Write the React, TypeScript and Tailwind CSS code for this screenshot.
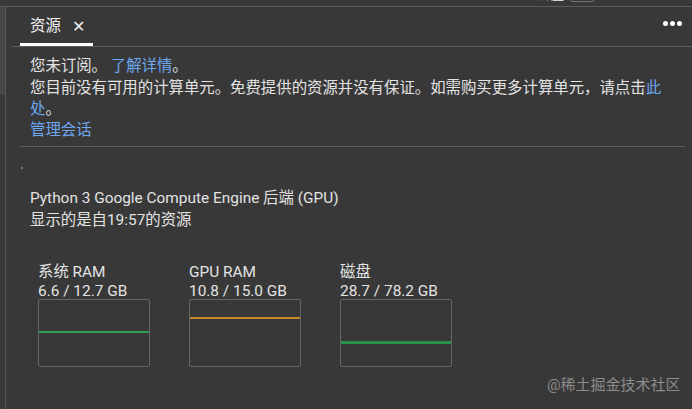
import * as React from "react";

// Colab-style "资源" side panel, dark theme.

const FONT = "font-['Roboto','Noto_Sans_CJK_SC',sans-serif]";

interface Meter {
  label: string;
  value: string;
  lineTop: number; // px from top of the chart box
  color: string;
  thick: string;
}

const METERS: Meter[] = [
  { label: "系统 RAM", value: "6.6 / 12.7 GB", lineTop: 31, color: "bg-[#2f9e55]", thick: "h-[2px]" },
  { label: "GPU RAM", value: "10.8 / 15.0 GB", lineTop: 17, color: "bg-[#c48a2c]", thick: "h-[2px]" },
  { label: "磁盘", value: "28.7 / 78.2 GB", lineTop: 41, color: "bg-[#2b8f4c]", thick: "h-[3px]" },
];

function MeterCard({ m }: { m: Meter }) {
  return (
    <div className="w-[112px]">
      <div className="text-[15.4px] leading-[19px] text-[#e3e3e3]">{m.label}</div>
      <div className="text-[15.4px] leading-[19px] text-[#e3e3e3]">{m.value}</div>
      <div className="relative mt-[-2px] h-[68px] w-[112px] rounded-[2px] border border-[#666]">
        <div
          className={`absolute left-0 right-0 ${m.color} ${m.thick}`}
          style={{ top: m.lineTop }}
        />
      </div>
    </div>
  );
}

export default function App() {
  return (
    <div className={`relative h-[409px] w-[692px] overflow-hidden bg-[#383838] ${FONT}`}>
      {/* sliver of the panel above */}
      <div className="relative h-[7px] border-b border-[#5a5a5a]">
        <span className="absolute left-[540px] top-[-13px] text-[12px] text-[#eee]">磁盘</span>
        <span className="absolute left-[570px] top-[-2px] h-[4px] w-[24px] rounded-[2px] border border-[#777]" />
      </div>

      <div className="flex h-[402px]">
        {/* left gutter / scrollbar */}
        <div className="w-[6px] border-r border-[#555]">
          <div className="h-[88px] w-[5px] bg-[#474747]" />
        </div>

        <div className="flex-1">
          {/* tab header */}
          <div className="ml-[6px] flex h-[40px] items-end justify-between border-b border-[#5c5c5c]">
            <div className="ml-[8px] flex h-[39px] w-[73px] items-center gap-[11px] border-b-[3px] border-white pl-[10px] pt-[3px] text-[15.4px] text-[#f0f0f0]">
              <span>资源</span>
              <span className="text-[16px] font-light leading-none">✕</span>
            </div>
            <div className="mb-[20px] mr-[10px] flex gap-[2px]">
              <span className="h-[5px] w-[5px] rounded-full bg-white" />
              <span className="h-[5px] w-[5px] rounded-full bg-white" />
              <span className="h-[5px] w-[5px] rounded-full bg-white" />
            </div>
          </div>

          {/* subscription notice */}
          <div className="ml-[14px] mr-[7px] border-b border-[#5c5c5c] px-[10px] pb-[5px] pt-[9px] text-[15.4px] leading-[21px] text-[#e3e3e3]">
            <div className="mb-[1px]">
              您未订阅。 <span className="text-[#6ea6ef]">了解详情</span>。
            </div>
            <div>
              您目前没有可用的计算单元。免费提供的资源并没有保证。如需购买更多计算单元，请点击
              <span className="text-[#6ea6ef]">此</span>
            </div>
            <div>
              <span className="text-[#6ea6ef]">处</span>。
            </div>
            <div className="text-[#6ea6ef]">管理会话</div>
          </div>

          {/* runtime info */}
          <div className="ml-[14px] pt-[20px]">
            <div className="ml-[1px] h-[2px] w-[2px] bg-[#777]" />
            <div className="mt-[18px] px-[10px] text-[15.4px] leading-[22px] text-[#e3e3e3]">
              <div>Python 3 Google Compute Engine 后端 (GPU)</div>
              <div>显示的是自19:57的资源</div>
            </div>

            <div className="ml-[18px] mt-[32px] flex gap-[39px]">
              {METERS.map((m) => (
                <MeterCard key={m.label} m={m} />
              ))}
            </div>
          </div>
        </div>
      </div>

      <div className="absolute left-[547px] top-[374px] text-[15px] text-[#8c8c8c]">@稀土掘金技术社区</div>
    </div>
  );
}
